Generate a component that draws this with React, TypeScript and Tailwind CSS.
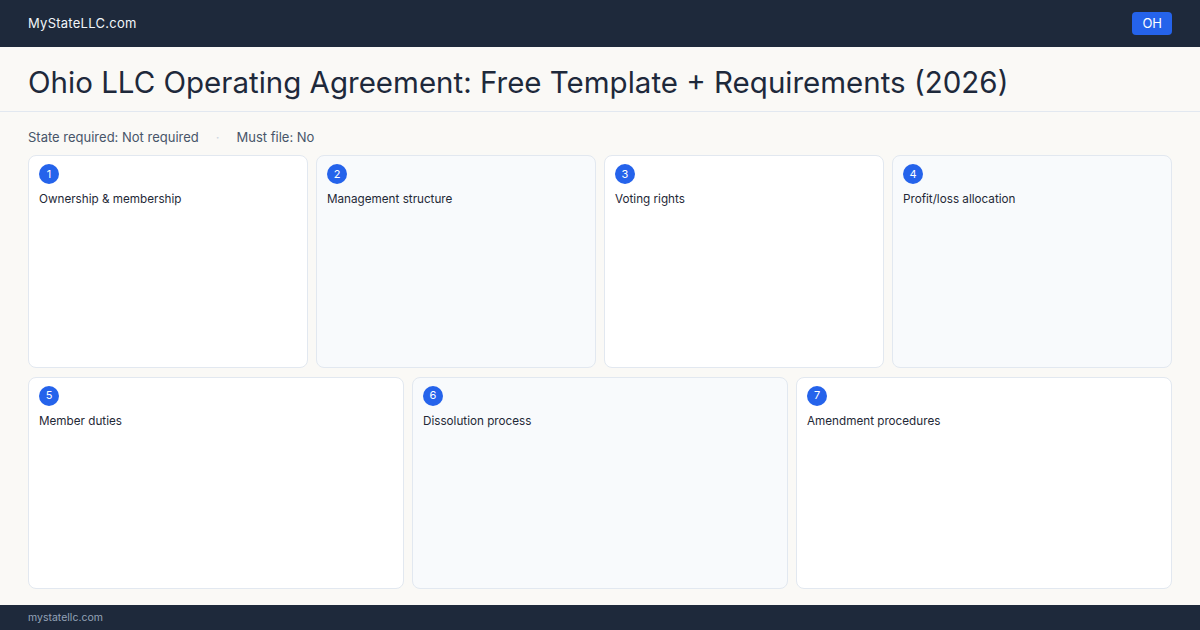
const topRow = [
  { n: 1, label: 'Ownership & membership' },
  { n: 2, label: 'Management structure' },
  { n: 3, label: 'Voting rights' },
  { n: 4, label: 'Profit/loss allocation' },
];

const bottomRow = [
  { n: 5, label: 'Member duties' },
  { n: 6, label: 'Dissolution process' },
  { n: 7, label: 'Amendment procedures' },
];

const Card = ({ n, label, shaded }: { n: number; label: string; shaded: boolean }) => (
  <div
    className={`flex flex-col rounded-lg border border-[#e2e8f0] px-[10px] pt-2 ${
      shaded ? 'bg-[#f8fafc]' : 'bg-white'
    }`}
  >
    <span className="flex h-5 w-5 items-center justify-center rounded-full bg-[#2563eb] text-[11px] text-white">
      {n}
    </span>
    <p className="mt-[7px] text-[11.7px] leading-4 text-[#1f2937]">{label}</p>
  </div>
);

export default function App() {
  return (
    <div
      className="flex h-[630px] w-[1200px] flex-col bg-[#faf9f6]"
      style={{ fontFamily: 'Inter, "Noto Sans", sans-serif' }}
    >
      <header className="flex h-[47px] items-center justify-between bg-[#1e293b] px-7">
        <span className="text-[13px] tracking-[0.02em] text-[#f1f5f9]">MyStateLLC.com</span>
        <span className="rounded bg-[#2563eb] px-[10px] py-[3px] text-[13px] leading-[17px] text-white">OH</span>
      </header>

      <div className="border-b border-[#e2e8f0] px-7 pb-[11px] pt-[17px]">
        <h1 className="text-[29.5px] leading-9 text-[#1e293b]">
          Ohio LLC Operating Agreement: Free Template + Requirements (2026)
        </h1>
      </div>

      <main className="flex flex-1 flex-col px-7 pb-4 pt-4">
        <div className="flex items-center gap-[17px] text-[13px] leading-[18px] text-[#475569]">
          <span>State required: Not required</span>
          <span className="text-[#cbd5e1]">·</span>
          <span>Must file: No</span>
        </div>

        <div className="mt-[9px] grid flex-1 grid-rows-2 gap-[9px]">
          <div className="grid grid-cols-4 gap-2">
            {topRow.map((c, i) => (
              <Card key={c.n} n={c.n} label={c.label} shaded={i % 2 === 1} />
            ))}
          </div>
          <div className="grid grid-cols-3 gap-2">
            {bottomRow.map((c, i) => (
              <Card key={c.n} n={c.n} label={c.label} shaded={i % 2 === 1} />
            ))}
          </div>
        </div>
      </main>

      <footer className="flex h-[25px] items-center bg-[#1e293b] px-7">
        <span className="text-[10.5px] text-[#94a3b8]">mystatellc.com</span>
      </footer>
    </div>
  );
}
